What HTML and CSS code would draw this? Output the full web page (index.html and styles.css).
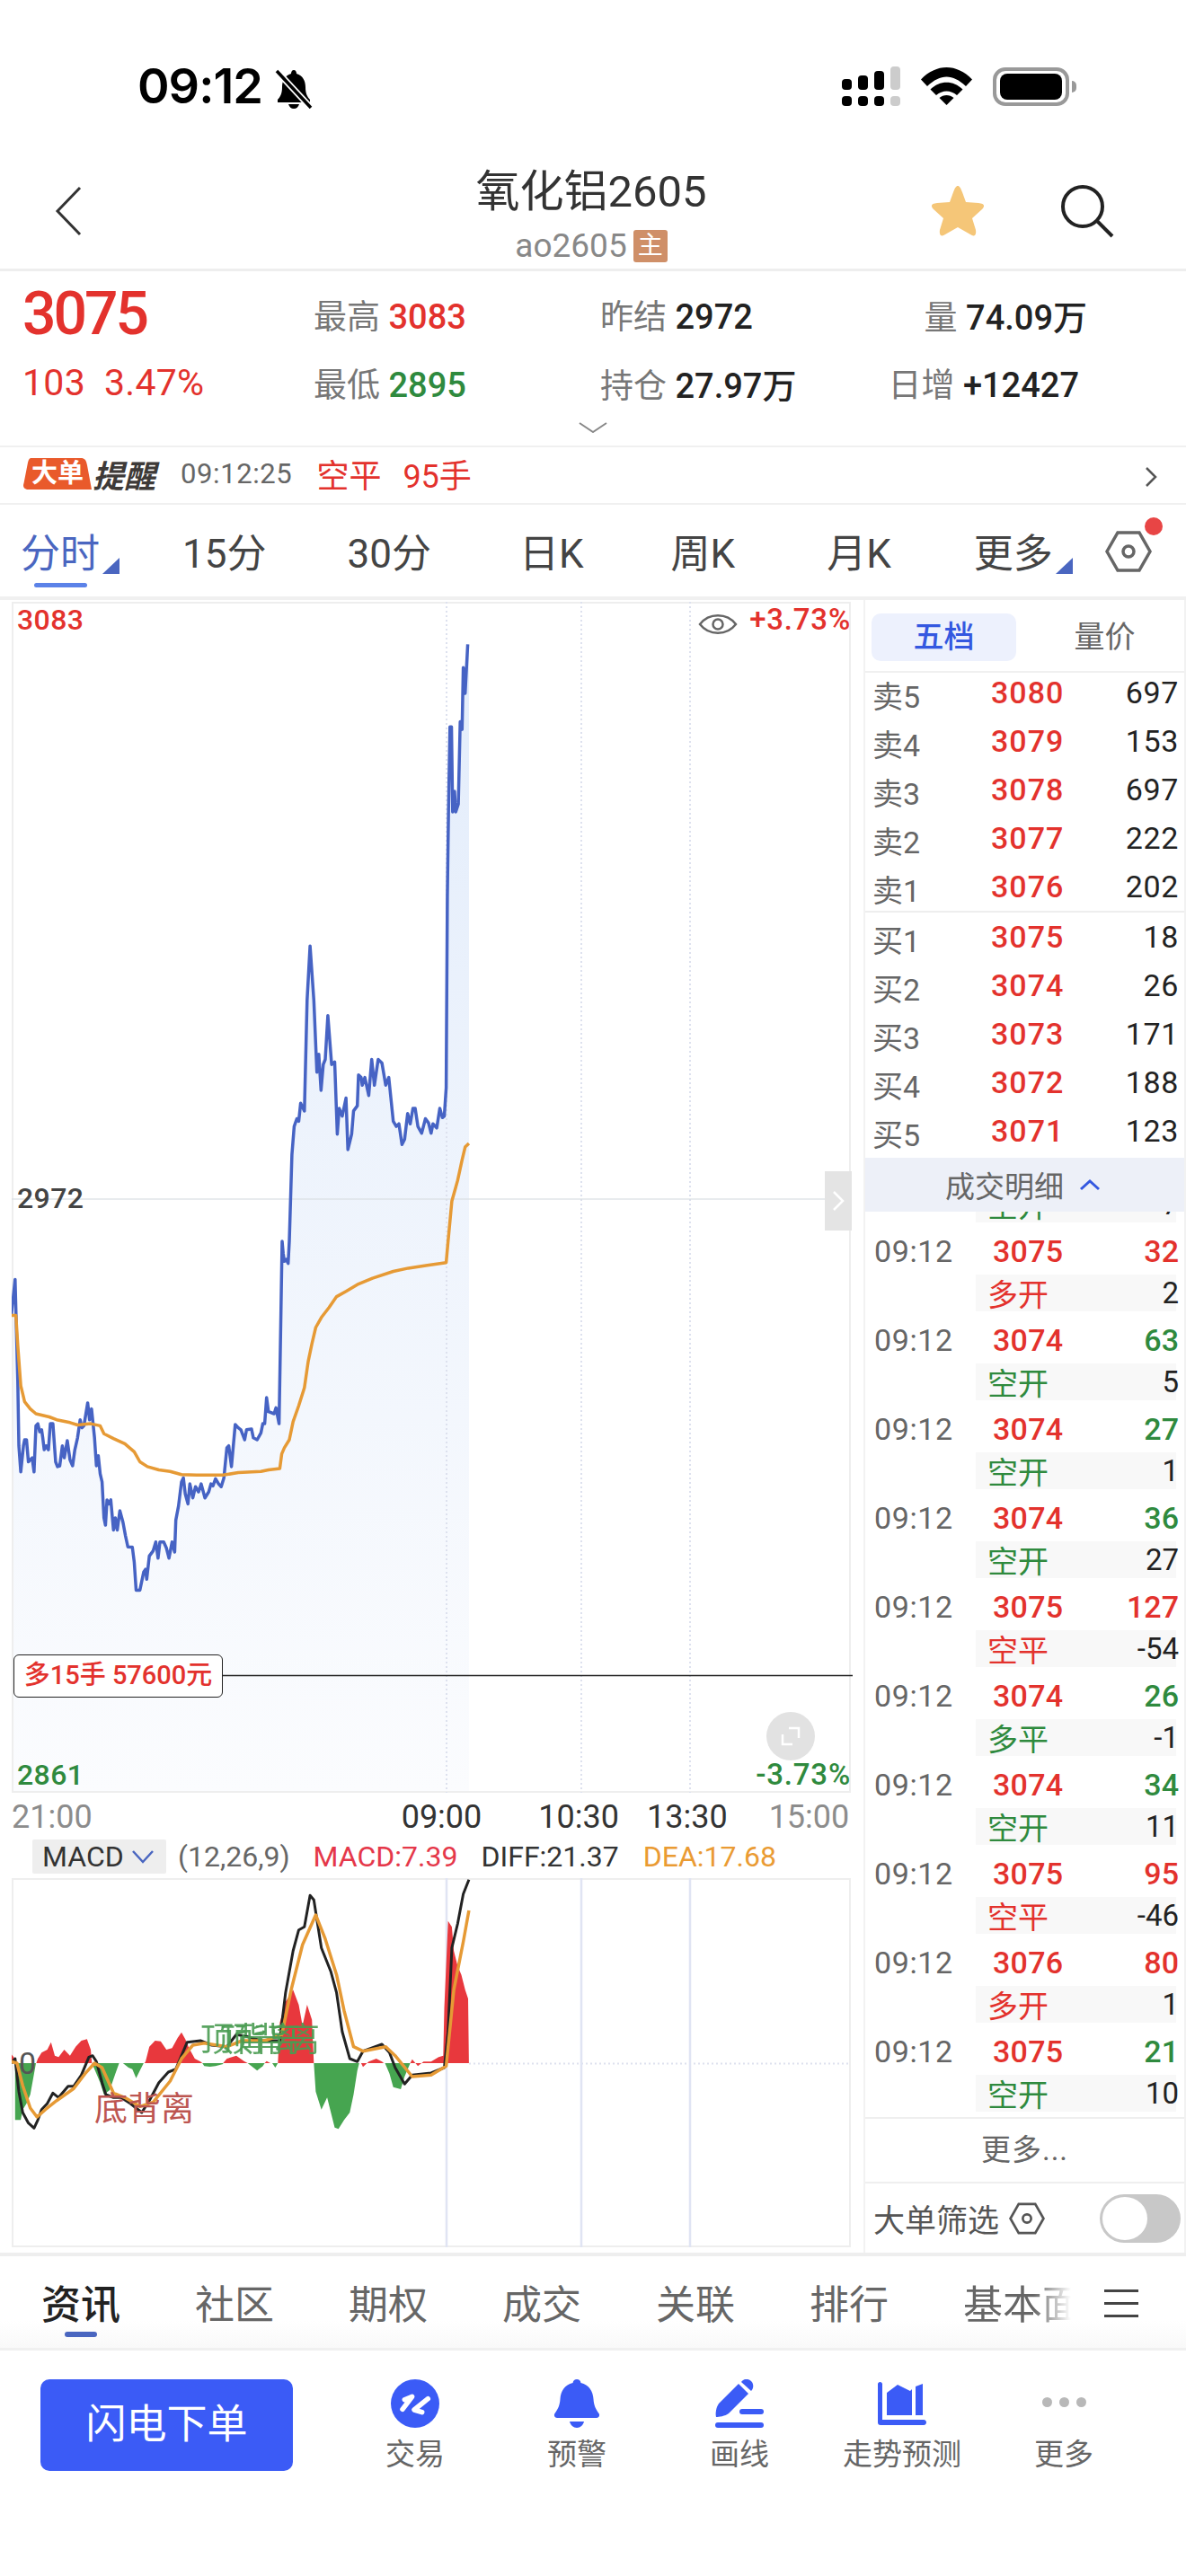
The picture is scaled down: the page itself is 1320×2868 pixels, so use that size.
FILE: index.html
```html
<!DOCTYPE html>
<html lang="zh">
<head>
  <meta charset="UTF-8">
  <title>氧化铝2605</title>
  <link rel="stylesheet" href="styles.css">
</head>
<body>
<div class="phone">

  <div class="status">
    <div class="status-left">
      <span class="clock">09:12</span>
      <svg class="mute" viewBox="0 0 44 44"><path d="M22 1c2 0 3 2 3 4 7 2 10 8 10 15 0 7 2 11 5 14v3H4v-3c3-3 5-7 5-14 0-7 3-13 10-15 0-2 1-4 3-4z" fill="#000"/><path d="M16 39h12c-1 3-3 5-6 5s-5-2-6-5z" fill="#000"/><path d="M3 2l38 41" stroke="#fff" stroke-width="7"/><path d="M3 2l38 41" stroke="#000" stroke-width="3.5"/></svg>
    </div>
    <div class="status-right">
      <svg class="signal" viewBox="0 0 65 44">
        <rect x="0" y="14" width="11" height="12" rx="4"/><rect x="18" y="10" width="11" height="16" rx="4"/><rect x="36" y="5" width="11" height="21" rx="4"/><rect x="54" y="0" width="11" height="26" rx="4" fill="#ccc"/>
        <rect x="0" y="33" width="11" height="11" rx="4"/><rect x="18" y="33" width="11" height="11" rx="4"/><rect x="36" y="33" width="11" height="11" rx="4"/><rect x="54" y="33" width="11" height="11" rx="4" fill="#ccc"/>
      </svg>
      <svg class="wifi" viewBox="0 0 57 42"><path d="M0 13.500C17-4.500 40-4.500 57 13.500L50 21C35 7 22 7 7 21z"/><path d="M10.500 24.500C21 14 36 14 46.500 24.500L40 31C33 25 24 25 17 31z"/><path d="M20.500 34C25 30 32 30 36.500 34L28.500 42z"/></svg>
      <div class="battery"><div class="battery-fill"></div></div>
      <div class="battery-cap"></div>
    </div>
  </div>

  <div class="nav">
    <svg class="nav-back" viewBox="0 0 30 56"><path d="M28 2L3 28l25 26" fill="none" stroke="#333" stroke-width="3"/></svg>
    <div class="nav-title">
      <div class="name">氧化铝2605</div>
      <div class="code">ao2605<span class="main-tag">主</span></div>
    </div>
    <svg class="nav-star" viewBox="0 0 62 60"><path d="M31 2c2 0 3 2 5 7l4 11 14 1c6 .5 8 3 4 7l-11 10 4 13c1 6-2 8-6 5l-14-8-14 8c-4 3-7 1-6-5l4-13L4 28c-4-4-2-6.500 4-7l14-1 4-11c2-5 3-7 5-7z" fill="#f5c678"/></svg>
    <svg class="nav-search" viewBox="0 0 60 60"><circle cx="25" cy="25" r="22" fill="none" stroke="#222" stroke-width="4"/><path d="M41 41l17 17" stroke="#222" stroke-width="4" fill="none"/></svg>
  </div>

  <div class="quote">
    <div class="quote-grid">
      <div class="last-price">3075</div>
      <div class="stat"><span>最高</span> <b class="red">3083</b></div>
      <div class="stat"><span>昨结</span> <b>2972</b></div>
      <div class="stat stat-end"><span>量</span> <b>74.09万</b></div>
      <div class="change red">103&nbsp;&nbsp;3.47%</div>
      <div class="stat"><span>最低</span> <b class="green">2895</b></div>
      <div class="stat"><span>持仓</span> <b>27.97万</b></div>
      <div class="stat stat-end stat-end-low"><span>日增</span> <b>+12427</b></div>
    </div>
    <svg class="quote-more" viewBox="0 0 32 12"><path d="M1 1l15 10L31 1" fill="none" stroke="#888" stroke-width="2"/></svg>
  </div>

  <div class="alert">
    <span class="alert-tag"><svg viewBox="0 0 76 35"><path d="M9 0H64C68 0 70 2 71 8L76 35H6C1 35-1 32 .5 28L5 5C6 1 7 0 9 0z" fill="#e95a2b"/></svg><b>大单</b></span>
    <span class="alert-word">提醒</span>
    <span class="alert-time">09:12:25</span>
    <span class="alert-kind">空平</span>
    <span class="alert-hands">95手</span>
    <svg class="alert-go" viewBox="0 0 14 24"><path d="M2 2l10 10L2 22" fill="none" stroke="#555" stroke-width="2.500"/></svg>
  </div>

  <div class="periods">
    <span class="period active">分时<i class="corner"></i><em class="period-line"></em></span>
    <span class="period p15">15分</span>
    <span class="period p30">30分</span>
    <span class="period pd">日K</span>
    <span class="period pw">周K</span>
    <span class="period pm">月K</span>
    <span class="period pmore">更多<i class="corner"></i></span>
    <span class="period-set">
      <svg viewBox="0 0 52 46"><path d="M14 2h24l12 21-12 21H14L2 23z" fill="none" stroke="#666" stroke-width="3.500"/><circle cx="26" cy="23" r="6" fill="none" stroke="#666" stroke-width="3.500"/></svg>
      <i class="red-dot"></i>
    </span>
  </div>

  <div class="main">
    <div class="charts">
      <div class="price-chart">
        <svg id="priceSvg" width="936" height="1326" viewBox="13 668 936 1326">
          <defs>
            <linearGradient id="areaFill" gradientUnits="userSpaceOnUse" x1="0" y1="668" x2="0" y2="1994">
              <stop offset="0" stop-color="#e2ecfb"/>
              <stop offset="1" stop-color="#fbfcfe"/>
            </linearGradient>
          </defs>
          <path id="priceArea" fill="url(#areaFill)"/>
          <rect x="14" y="669" width="932" height="1324" fill="none" stroke="#eee" stroke-width="2"/>
          <path class="grid-dots" d="M497 668V1994M647 668V1994M768 668V1994"/>
          <path d="M13 1333H946" stroke="#d9dde3" stroke-opacity=".6" stroke-width="2"/>
          <path d="M248 1863.500H949" stroke="#222" stroke-width="1.500"/>
          <path id="priceLine" class="line-blue"/>
          <path id="avgLine" class="line-orange"/>
        </svg>
        <span class="tag tag-high red">3083</span>
        <span class="tag tag-base">2972</span>
        <span class="tag tag-low green">2861</span>
        <span class="tag pct-high red">+3.73%</span>
        <span class="tag pct-low green">-3.73%</span>
        <svg class="eye" viewBox="0 0 44 30"><path d="M2 15C12 2 32 2 42 15 32 28 12 28 2 15z" fill="none" stroke="#666" stroke-width="2.500"/><circle cx="22" cy="15" r="5.500" fill="none" stroke="#666" stroke-width="2.500"/></svg>
        <div class="position red">多15手 57600元</div>
        <div class="side-handle"><svg viewBox="0 0 14 24"><path d="M2 2l10 10L2 22" fill="none" stroke="#fff" stroke-width="2.500"/></svg></div>
        <div class="expand"><svg viewBox="0 0 24 24"><path d="M10 3h11v11M14 21H3V10" fill="none" stroke="#fff" stroke-width="2.500"/></svg></div>
      </div>

      <div class="time-axis">
        <span class="t-open">21:00</span>
        <span class="t-dark t-nine">09:00</span>
        <span class="t-dark t-ten">10:30</span>
        <span class="t-dark t-one">13:30</span>
        <span class="t-close">15:00</span>
      </div>

      <div class="legend">
        <span class="legend-pick">MACD<svg viewBox="0 0 26 16"><path d="M2 2l11 12L24 2" fill="none" stroke="#4a66c0" stroke-width="2.500"/></svg></span>
        <span class="legend-args">(12,26,9)</span>
        <span class="legend-macd">MACD:7.39</span>
        <span class="legend-diff">DIFF:21.37</span>
        <span class="legend-dea">DEA:17.68</span>
      </div>

      <div class="macd-chart">
        <svg id="macdSvg" width="936" height="411" viewBox="13 2089 936 411">
          <rect x="14" y="2090" width="932" height="409" fill="none" stroke="#eee" stroke-width="2"/>
          <path d="M522 2295.500H946" class="grid-dots"/>
          <path d="M497 2089V2501M647 2089V2501M768 2089V2501" stroke="#e0e4f3" stroke-width="2.500" fill="none"/>
          <g id="macdBars"></g>
          <path id="diffLine" class="line-black"/>
          <path id="deaLine" class="line-orange"/>
        </svg>
        <span class="zero-mark">0</span>
        <span class="sign sign-top">顶背离</span>
        <span class="sign sign-top sign-top2">顶背离</span>
        <span class="sign sign-bottom">底背离</span>
      </div>
    </div>

    <div class="side">
      <div class="side-tabs">
        <span class="side-tab on">五档</span>
        <span class="side-tab">量价</span>
      </div>

      <div class="book book-sell">
        <div class="level"><span>卖5</span><b>3080</b><i>697</i></div>
        <div class="level"><span>卖4</span><b>3079</b><i>153</i></div>
        <div class="level"><span>卖3</span><b>3078</b><i>697</i></div>
        <div class="level"><span>卖2</span><b>3077</b><i>222</i></div>
        <div class="level"><span>卖1</span><b>3076</b><i>202</i></div>
      </div>
      <div class="book">
        <div class="level"><span>买1</span><b>3075</b><i>18</i></div>
        <div class="level"><span>买2</span><b>3074</b><i>26</i></div>
        <div class="level"><span>买3</span><b>3073</b><i>171</i></div>
        <div class="level"><span>买4</span><b>3072</b><i>188</i></div>
        <div class="level"><span>买5</span><b>3071</b><i>123</i></div>
      </div>

      <div class="deals-head">成交明细<svg viewBox="0 0 24 14"><path d="M2 12L12 3l10 9" fill="none" stroke="#3458e0" stroke-width="3"/></svg></div>

      <div class="deals">
        <div class="deal deal-cut">
          <div class="deal-top"></div>
          <div class="deal-sub"><span class="green">空开</span><i>7</i></div>
        </div>
        <div class="deal">
          <div class="deal-top"><span>09:12</span><b>3075</b><em class="red">32</em></div>
          <div class="deal-sub"><span class="red">多开</span><i>2</i></div>
        </div>
        <div class="deal">
          <div class="deal-top"><span>09:12</span><b>3074</b><em class="green">63</em></div>
          <div class="deal-sub"><span class="green">空开</span><i>5</i></div>
        </div>
        <div class="deal">
          <div class="deal-top"><span>09:12</span><b>3074</b><em class="green">27</em></div>
          <div class="deal-sub"><span class="green">空开</span><i>1</i></div>
        </div>
        <div class="deal">
          <div class="deal-top"><span>09:12</span><b>3074</b><em class="green">36</em></div>
          <div class="deal-sub"><span class="green">空开</span><i>27</i></div>
        </div>
        <div class="deal">
          <div class="deal-top"><span>09:12</span><b>3075</b><em class="red">127</em></div>
          <div class="deal-sub"><span class="red">空平</span><i>-54</i></div>
        </div>
        <div class="deal">
          <div class="deal-top"><span>09:12</span><b>3074</b><em class="green">26</em></div>
          <div class="deal-sub"><span class="green">多平</span><i>-1</i></div>
        </div>
        <div class="deal">
          <div class="deal-top"><span>09:12</span><b>3074</b><em class="green">34</em></div>
          <div class="deal-sub"><span class="green">空开</span><i>11</i></div>
        </div>
        <div class="deal">
          <div class="deal-top"><span>09:12</span><b>3075</b><em class="red">95</em></div>
          <div class="deal-sub"><span class="red">空平</span><i>-46</i></div>
        </div>
        <div class="deal">
          <div class="deal-top"><span>09:12</span><b>3076</b><em class="red">80</em></div>
          <div class="deal-sub"><span class="red">多开</span><i>1</i></div>
        </div>
        <div class="deal">
          <div class="deal-top"><span>09:12</span><b>3075</b><em class="green">21</em></div>
          <div class="deal-sub"><span class="green">空开</span><i>10</i></div>
        </div>
      </div>

      <div class="deals-more">更多...</div>

      <div class="filter">
        <span>大单筛选</span>
        <svg class="filter-set" viewBox="0 0 52 46"><path d="M14 2h24l12 21-12 21H14L2 23z" fill="none" stroke="#555" stroke-width="3.500"/><circle cx="26" cy="23" r="6" fill="none" stroke="#555" stroke-width="3.500"/></svg>
        <div class="toggle"><div class="knob"></div></div>
      </div>
    </div>
  </div>

  <div class="news-tabs">
    <span class="news-tab on">资讯<em></em></span>
    <span class="news-tab">社区</span>
    <span class="news-tab">期权</span>
    <span class="news-tab">成交</span>
    <span class="news-tab">关联</span>
    <span class="news-tab">排行</span>
    <span class="news-tab news-fade">基本面</span>
    <span class="news-menu"><i></i><i></i><i></i></span>
  </div>

  <div class="actions">
    <div class="flash-order">闪电下单</div>
    <div class="action a-trade">
      <svg viewBox="0 0 54 54"><circle cx="27" cy="27" r="27" fill="#3b5bf6"/><path d="M15.300 22.700L23.700 19.300 13 33.300M41.300 21.700L26 34 34.700 36.700" stroke="#fff" stroke-width="5.500" stroke-linecap="round" stroke-linejoin="round" fill="none"/></svg>
      <span>交易</span>
    </div>
    <div class="action a-alarm">
      <svg viewBox="-2 0 54 54"><path d="M25 0c2.500 0 4 1.500 4.500 4 9 2 13.500 9 14 18 .5 7 2 10 6 16 1.500 2 0 5-2.500 5H3C.5 43-1 40 .5 38c4-6 5.500-9 6-16 .5-9 5-16 14-18C21 1.500 22.500 0 25 0z" fill="#3b5bf6"/><path d="M17 47h16c-1 4-4 7-8 7s-7-3-8-7z" fill="#3b5bf6"/></svg>
      <span>预警</span>
    </div>
    <div class="action a-draw">
      <svg viewBox="0 0 54 54"><path d="M26 5L37 16 15 38C11 41 4 42 1 42 0 38 1 31 4 27z" fill="#3b5bf6"/><path d="M29 3C32-1 37-1 40 2 43 5 43 10 40 13z" fill="#3b5bf6"/><rect x="27" y="33" width="27" height="6" rx="3" fill="#3b5bf6"/><rect y="48" width="54" height="6" rx="3" fill="#3b5bf6"/></svg>
      <span>画线</span>
    </div>
    <div class="action a-trend">
      <svg viewBox="0 -3 54 54"><path d="M2.500 0C4 0 5 1 5 2.500V42H51C53 42 54 43.500 54 45S53 48 51 48H3C1 48 0 47 0 45V2.500C0 1 1 0 2.500 0z" fill="#3b5bf6"/><path d="M10 12L22 3 36 10 38 8V37H10z" fill="#3b5bf6"/><path d="M42 5L50 2V37H42z" fill="#3b5bf6"/></svg>
      <span>走势预测</span>
    </div>
    <div class="action a-more">
      <div class="dots"><i></i><i></i><i></i></div>
      <span>更多</span>
    </div>
  </div>
</div>
<script src="chart.js"></script>
</body>
</html>
```

FILE: styles.css
```css
* { box-sizing: border-box; }
body {
  margin: 0;
  background: #fff;
  font-family: Roboto, "Noto Sans CJK SC", sans-serif;
  color: #222;
}
.phone {
  width: 1320px;
  height: 2868px;
  overflow: hidden;
}
.red { color: #e3322d; }
.green { color: #2f8a3e; }
b, i, em { font-style: normal; }

/* status bar */
.status {
  height: 180px;
  display: flex;
  justify-content: space-between;
  padding: 72px 122px 0 153px;
}
.status-left { display: flex; align-items: flex-start; }
.clock {
  font-family: Inter, sans-serif;
  font-weight: 600;
  font-size: 54px;
  line-height: 48px;
  color: #000;
  letter-spacing: -1px;
}
.mute { width: 44px; height: 44px; margin: 5px 0 0 13px; }
.status-right { display: flex; align-items: flex-start; }
.signal { width: 65px; height: 44px; margin-top: 2px; }
.wifi { width: 57px; height: 42px; margin: 3px 0 0 23px; }
.battery {
  width: 85px;
  height: 43px;
  margin: 3px 0 0 23px;
  border: 4px solid #999;
  border-radius: 14px;
  padding: 3px 4px;
}
.battery-fill { height: 100%; background: #000; border-radius: 8px; }
.battery-cap {
  width: 5px;
  height: 13px;
  margin: 18px 0 0 3px;
  background: #999;
  border-radius: 0 6px 6px 0;
}

/* nav */
.nav {
  height: 122px;
  position: relative;
  border-bottom: 3px solid #eeeeee;
}
.nav-title { text-align: center; padding: 7px 4px 0 0; }
.name { font-size: 49px; line-height: 54px; color: #333; }
.code {
  font-size: 37px;
  line-height: 40px;
  color: #888;
  margin-top: 13px;
  display: flex;
  justify-content: center;
  align-items: center;
  gap: 7px;
}
.main-tag {
  width: 38px;
  height: 36px;
  background: #cf8f68;
  color: #fff;
  font-size: 28px;
  line-height: 36px;
  border-radius: 3px;
}
.nav-back { position: absolute; left: 61px; top: 27px; width: 30px; height: 56px; }
.nav-star { position: absolute; left: 1035px; top: 25px; width: 62px; height: 60px; }
.nav-search { position: absolute; left: 1180px; top: 25px; width: 60px; height: 60px; }

/* quote */
.quote {
  height: 196px;
  position: relative;
  border-bottom: 2px solid #f0f0f0;
  padding: 10px 0 0 25px;
}
.quote-grid {
  display: grid;
  grid-template-columns: 324px 319px 1fr 320px;
  grid-template-rows: 76px 76px;
  align-items: center;
}
.last-price { font-size: 66px; font-weight: 500; color: #e3322d; line-height: 64px; letter-spacing: -3px; }
.change { font-size: 41px; letter-spacing: .3px; }
.stat { font-size: 38px; white-space: nowrap; }
.stat span { color: #777; font-size: 37px; }
.stat b { font-weight: 500; }
.stat-end { justify-self: end; margin-right: 110px; }
.stat-end-low { margin-right: 119px; }
.quote-more { position: absolute; left: 644px; top: 168px; width: 32px; height: 12px; }

/* big order alert */
.alert {
  height: 64px;
  display: flex;
  align-items: center;
  padding: 0 0 4px 26px;
  position: relative;
  border-bottom: 2px solid #f0f0f0;
}
.alert-tag {
  position: relative;
  width: 76px;
  height: 35px;
  color: #fff;
  text-align: center;
  flex: none;
  display: flex;
  align-items: center;
  justify-content: center;
}
.alert-tag svg { position: absolute; left: 0; top: 0; width: 76px; height: 35px; }
.alert-tag b { position: relative; font-size: 29px; font-weight: 700; line-height: 35px; }
.alert-word { font-size: 35px; font-weight: 700; font-style: italic; color: #3e3a38; margin-left: 1px; }
.alert-time { font-size: 31px; color: #666; margin-left: 28px; letter-spacing: .6px; }
.alert-kind { font-size: 36px; color: #e3322d; margin-left: 27px; }
.alert-hands { font-size: 36px; color: #e3322d; margin-left: 24px; }
.alert-go { position: absolute; left: 1274px; top: 21px; width: 14px; height: 24px; }

/* period tabs */
.periods {
  height: 106px;
  display: flex;
  align-items: center;
  padding-left: 23px;
  position: relative;
  border-bottom: 4px solid #f0f0f0;
  font-size: 44px;
  color: #444;
}
.period { position: relative; white-space: nowrap; }
.period.active { color: #4a66c0; }
.p15 { margin-left: 92px; }
.p30 { margin-left: 90px; }
.pd { margin-left: 98px; }
.pw { margin-left: 97px; }
.pm { margin-left: 102px; }
.pmore { margin-left: 92px; }
.corner {
  position: absolute;
  right: -22px;
  bottom: 6px;
  width: 0;
  height: 0;
  border-left: 19px solid transparent;
  border-bottom: 18px solid #4a66c0;
}
.period-line {
  position: absolute;
  left: 15px;
  bottom: -9px;
  width: 59px;
  height: 5px;
  border-radius: 3px;
  background: #5b82e8;
}
.period-set { position: absolute; left: 1230px; top: 29px; width: 52px; height: 46px; }
.period-set svg { width: 52px; height: 46px; display: block; }
.red-dot {
  position: absolute;
  left: 44px;
  top: -15px;
  width: 20px;
  height: 20px;
  border-radius: 50%;
  background: #e84545;
}

/* main area */
.main {
  height: 1844px;
  display: flex;
  border-bottom: 4px solid #eeeeee;
}
.charts { width: 961px; padding: 2px 0 0 13px; flex: none; }
.price-chart { position: relative; height: 1326px; width: 936px; }
.price-chart svg, .macd-chart svg { display: block; }
.grid-dots { stroke: #dde1ee; stroke-width: 2; stroke-dasharray: 2 3; fill: none; }
.line-blue { fill: none; stroke: #4663c4; stroke-width: 3.500; stroke-linejoin: round; }
.line-orange { fill: none; stroke: #e69a35; stroke-width: 3.500; stroke-linejoin: round; }
.line-black { fill: none; stroke: #222; stroke-width: 3; stroke-linejoin: round; }

.tag { position: absolute; font-size: 32px; font-weight: 500; line-height: 36px; letter-spacing: .4px; }
.tag-high { left: 6px; top: 2px; }
.tag-base { left: 6px; top: 646px; color: #444; }
.tag-low { left: 6px; top: 1288px; }
.pct-high, .pct-low { font-size: 33px; letter-spacing: .8px; }
.pct-high { right: 2px; top: 2px; }
.pct-low { right: 2px; top: 1288px; }
.eye { position: absolute; left: 764px; top: 10px; width: 44px; height: 30px; }
.position {
  position: absolute;
  left: 2px;
  top: 1172px;
  width: 233px;
  height: 48px;
  border: 1.500px solid #222;
  border-radius: 6px;
  background: #fff;
  font-size: 29px;
  font-weight: 500;
  line-height: 45px;
  text-align: center;
  white-space: nowrap;
}
.side-handle {
  position: absolute;
  left: 905px;
  top: 634px;
  width: 30px;
  height: 66px;
  background: #e4e4e4;
  display: flex;
  align-items: center;
  justify-content: center;
}
.side-handle svg { width: 14px; height: 24px; }
.expand {
  position: absolute;
  left: 840px;
  top: 1236px;
  width: 54px;
  height: 54px;
  border-radius: 50%;
  background: #e2e2e2;
  display: flex;
  align-items: center;
  justify-content: center;
}
.expand svg { width: 24px; height: 24px; }

.time-axis {
  height: 53px;
  display: flex;
  align-items: center;
  font-size: 36px;
}
.t-open, .t-close { color: #8c8c8c; }
.t-dark { color: #333; }
.t-nine { margin-left: 344px; }
.t-ten { margin-left: 63px; }
.t-one { margin-left: 31px; }
.t-close { margin-left: 46px; }

.legend {
  height: 38px;
  margin-bottom: 4px;
  display: flex;
  align-items: center;
  font-size: 32px;
  white-space: nowrap;
  position: relative;
  top: -1px;
}
.legend-pick {
  margin-left: 23px;
  width: 149px;
  height: 38px;
  background: #eeeeee;
  border-radius: 2px;
  padding-left: 11px;
  display: flex;
  align-items: center;
  color: #333;
}
.legend-pick svg { width: 26px; height: 16px; margin-left: 8px; }
.legend-args { margin-left: 13px; color: #666; }
.legend-macd { margin-left: 26px; color: #e5384a; }
.legend-diff { margin-left: 26px; color: #333; }
.legend-dea { margin-left: 27px; color: #ea9b33; }

.macd-chart { position: relative; height: 411px; width: 936px; }
.zero-mark { position: absolute; left: 8px; top: 186px; font-size: 34px; line-height: 40px; color: #555; }
.sign { position: absolute; font-size: 37px; line-height: 44px; white-space: nowrap; }
.sign-top { left: 210px; top: 159px; color: #4a9c52; opacity: .9; }
.sign-top2 { left: 232px; }
.sign-bottom { left: 92px; top: 236px; color: #bd5651; }

/* right panel */
.side {
  flex: none;
  width: 359px;
  border-left: 2px solid #f2f2f2;
  border-right: 2px solid #f2f2f2;
  display: flex;
  flex-direction: column;
}
.side-tabs {
  height: 81px;
  flex: none;
  padding: 15px 0 0 7px;
  display: flex;
  border-bottom: 2px solid #f0f0f0;
}
.side-tab {
  width: 161px;
  height: 53px;
  text-align: center;
  font-size: 34px;
  line-height: 53px;
  color: #666;
  border-radius: 10px;
}
.side-tab + .side-tab { margin-left: 18px; }
.side-tab.on { background: #edf1fd; color: #3458e0; font-weight: 500; }
.book-sell { border-bottom: 2px solid #eeeeee; margin-top: -5px; }
.level {
  height: 54px;
  display: flex;
  align-items: center;
  padding: 0 6px 0 8px;
}
.level span { width: 132px; font-size: 34px; color: #666; padding-top: 5px; }
.level b { font-size: 34px; font-weight: 500; color: #e3322d; letter-spacing: 1px; }
.level i { margin-left: auto; font-size: 34px; color: #222; letter-spacing: .6px; }
.book + .book { margin-bottom: 3px; }

.deals-head {
  height: 60px;
  flex: none;
  background: #edf0f8;
  display: flex;
  align-items: center;
  justify-content: center;
  font-size: 33px;
  color: #666;
  padding-right: 4px;
}
.deals-head svg { width: 24px; height: 14px; margin-left: 17px; }
.deals { height: 1008px; flex: none; overflow: hidden; }
.deal { height: 99px; padding: 0 6px 0 10px; }
.deal-cut { margin-top: -80px; }
.deal-top { height: 50px; display: flex; align-items: center; font-size: 34px; }
.deal-top span { width: 132px; color: #666; letter-spacing: .6px; }
.deal-top b { font-weight: 500; color: #e3322d; letter-spacing: .3px; }
.deal-top em { margin-left: auto; font-weight: 500; }
.deal-sub {
  height: 41px;
  margin: 1px 3px 0 113px;
  background: #f8f8f8;
  display: flex;
  align-items: center;
  padding-left: 13px;
  font-size: 34px;
}
.deal-sub i { margin-left: auto; font-size: 33px; color: #222; margin-right: -3px; }

.deals-more {
  height: 74px;
  flex: none;
  border-top: 2px solid #efefef;
  border-bottom: 2px solid #efefef;
  text-align: center;
  font-size: 33px;
  line-height: 70px;
  color: #666;
  letter-spacing: 1px;
}
.filter {
  flex: 1;
  display: flex;
  align-items: center;
  padding-left: 9px;
  font-size: 35px;
  color: #555;
}
.filter-set { width: 40px; height: 36px; margin-left: 11px; }
.toggle {
  width: 90px;
  height: 54px;
  margin-left: auto;
  margin-right: 4px;
  border-radius: 27px;
  background: #c8c8c8;
  padding: 3px;
}
.knob { width: 50px; height: 48px; border-radius: 50%; background: #fff; }

/* bottom tabs */
.news-tabs {
  height: 105px;
  display: flex;
  align-items: center;
  gap: 83px;
  padding: 0 0 0 46px;
  position: relative;
  font-size: 44px;
  color: #666;
  border-bottom: 3px solid #f0f0f0;
  background: linear-gradient(#fff 70%, #f9f9f9);
}
.news-tab { position: relative; white-space: nowrap; flex: none; }
.news-tab.on { color: #222; font-weight: 500; }
.news-tab em {
  position: absolute;
  left: 26px;
  bottom: -7px;
  width: 36px;
  height: 6px;
  border-radius: 3px;
  background: #4a66c0;
}
.news-fade {
  width: 120px;
  overflow: hidden;
  -webkit-mask-image: linear-gradient(90deg, #000 65%, transparent);
  mask-image: linear-gradient(90deg, #000 65%, transparent);
}
.news-menu {
  position: absolute;
  left: 1229px;
  top: 37px;
  width: 38px;
  height: 31px;
  display: flex;
  flex-direction: column;
  justify-content: space-between;
}
.news-menu i { height: 3px; background: #444; display: block; }

/* bottom actions */
.actions {
  height: 253px;
  position: relative;
  padding: 32px 0 0 45px;
  display: flex;
}
.flash-order {
  width: 281px;
  height: 102px;
  border-radius: 10px;
  background: #3b5bf6;
  color: #fff;
  font-size: 45px;
  line-height: 102px;
  text-align: center;
  flex: none;
}
.action {
  width: 170px;
  flex: none;
  display: flex;
  flex-direction: column;
  align-items: center;
  font-size: 33px;
  line-height: 40px;
  color: #666;
}
.action svg, .dots { width: 54px; height: 54px; margin-bottom: 10px; flex: none; }
.a-trade { margin-left: 51px; }
.a-alarm { margin-left: 10px; }
.a-draw { margin-left: 11px; }
.a-trend { margin-left: 11px; }
.a-more { margin-left: 10px; }
.dots { display: flex; align-items: center; justify-content: center; gap: 8px; padding-bottom: 4px; }
.dots i { width: 11px; height: 11px; border-radius: 50%; background: #b8b8b8; }
```

FILE: chart.js
```js
// series were read off the picture at 2.376x horizontally, each with its own vertical scale
const SX = 1 / 2.376;

function toPage(points, top, scaleY) {
  return points.map(([x, y]) => [x * SX, top + y * scaleY]);
}

function pathOf(points) {
  return 'M' + points.map(p => p[0].toFixed(1) + ' ' + p[1].toFixed(1)).join('L');
}

const lowerPart = t => toPage(t, 1380, 1 / 2.24);
const upperPart = t => toPage(t, 480, 1 / 1.742);
const macdPart = t => toPage(t, 2000, 1 / 3);

const price = lowerPart([
  [30,185],[40,95],[47,350],[50,510],[55,575],[62,510],[65,495],[70,495],[75,550],[80,545],[85,540],[90,575],
  [95,460],[100,455],[105,475],[110,470],[113,490],[117,520],[122,510],[128,520],[133,455],[140,455],[147,550],
  [152,562],[158,560],[165,510],[170,540],[178,497],[185,545],[192,560],[198,520],[205,490],[212,445],[217,465],
  [222,460],[232,403],[237,445],[242,418],[250,490],[255,560],[260,535],[265,580],[270,600],[275,690],[279,708],
  [283,645],[288,655],[293,645],[300,720],[305,690],[310,720],[317,672],[325,700],[332,735],[338,762],[350,763],
  [355,800],[360,870],[370,870],[380,825],[385,818],[388,843],[395,785],[405,772],[412,750],[418,790],[423,750],
  [433,750],[440,765],[447,790],[455,750],[462,775],[465,695],[472,660],[480,600],[485,590],[490,630],[497,655],
  [502,605],[510,640],[517,612],[525,625],[532,605],[542,640],[552,625],[558,605],[563,610],[570,592],[578,605],
  [585,612],[592,590],[600,515],[605,510],[612,562],[622,457],[630,465],[637,470],[647,495],[652,470],[665,468],
  [670,490],[680,495],[690,478],[695,455],[700,455],[705,390],[710,425],[725,430],[730,415],[738,455],[742,230],
  [746,0],[749,30],[752,50],[757,45],[762,55],[765,0]
]).concat(upperPart([
  [772,1400],[778,1345],[785,1330],[790,1335],[795,1300],[805,1315],[812,1100],[820,995],[830,1100],[838,1240],
  [843,1205],[849,1275],[855,1225],[860,1215],[867,1130],[877,1225],[885,1220],[892,1360],[897,1310],[905,1325],
  [915,1290],[920,1390],[930,1360],[935,1315],[945,1305],[948,1245],[955,1250],[958,1265],[965,1250],[975,1285],
  [983,1215],[990,1265],[1000,1215],[1010,1222],[1020,1265],[1028,1250],[1040,1335],[1048,1345],[1055,1340],
  [1063,1380],[1070,1370],[1078,1320],[1085,1340],[1092,1310],[1098,1310],[1105,1345],[1115,1358],[1125,1330],
  [1133,1338],[1140,1358],[1145,1340],[1155,1348],[1163,1310],[1170,1328],[1175,1325],[1180,1270],[1183,900],
  [1186,730],[1190,570],[1194,570],[1197,735],[1202,695],[1205,735],[1212,720],[1217,560],[1222,575],[1225,455],
  [1230,505],[1237,410]
]));

const average = lowerPart([
  [30,185],[42,185],[47,260],[55,360],[65,400],[80,418],[95,430],[130,438],[150,445],[185,452],[205,458],[240,455],
  [265,460],[275,480],[300,492],[330,505],[355,525],[370,550],[390,562],[420,570],[450,574],[480,582],[520,583],
  [590,583],[630,577],[690,574],[710,570],[740,567],[745,530],[752,515],[765,495],[775,450],[790,410],[805,365],
  [815,300],[825,255],[835,215],[850,190],[870,165],[890,138],[915,125],[945,108],[985,92],[1040,75],[1080,67],
  [1130,60],[1180,53],[1185,0]
]).concat(upperPart([[1195,1490],[1210,1450],[1222,1410],[1230,1385],[1240,1378]]));

const diff = macdPart([
  [30,885],[40,870],[50,980],[60,1050],[75,1085],[90,1102],[100,1075],[110,1040],[125,1020],[140,985],[155,1000],
  [180,962],[195,962],[215,925],[235,865],[245,860],[255,880],[270,950],[280,990],[300,1000],[320,1000],[345,1020],
  [375,1050],[395,1010],[420,950],[445,915],[465,905],[480,860],[495,815],[530,810],[560,825],[600,830],[625,790],
  [650,795],[690,810],[740,810],[755,650],[775,510],[790,440],[805,430],[820,325],[830,340],[850,500],[875,580],
  [890,650],[905,780],[925,870],[945,880],[960,845],[1010,822],[1030,850],[1045,900],[1070,955],[1090,925],
  [1140,918],[1175,900],[1185,780],[1195,500],[1210,420],[1225,320],[1240,272]
]);

const dea = macdPart([
  [30,880],[45,885],[60,960],[80,1035],[98,1065],[120,1040],[150,1010],[195,970],[225,920],[250,885],[270,900],
  [300,985],[330,1000],[370,1030],[405,1015],[450,945],[480,870],[510,825],[540,818],[600,830],[640,810],[700,810],
  [745,790],[770,640],[800,490],[835,390],[860,470],[890,590],[910,710],[935,830],[960,845],[1020,830],[1045,860],
  [1090,930],[1140,925],[1180,895],[1200,640],[1225,480],[1240,375]
]);

const RED = '#e8383d';
const GREEN = '#46a550';
const bars = [
  [RED, [[30,855],[36,865],[40,885]]],
  [GREEN, [[40,1075],[55,1075],[60,1040],[70,1020],[80,990],[90,920],[95,885]]],
  [RED, [[96,885],[100,870],[110,850],[125,840],[135,815],[145,860],[155,865],[170,840],[185,860],[200,830],[215,810],[230,805],[240,840],[243,885]]],
  [GREEN, [[243,885],[255,920],[265,950],[275,990],[290,975],[305,920],[315,885],[325,885],[340,900],[350,905],[360,935],[370,910],[380,885]]],
  [RED, [[382,885],[385,880],[395,830],[410,810],[425,812],[440,840],[455,835],[470,800],[480,782],[490,805],[500,835],[515,870],[530,880],[535,885]]],
  [GREEN, [[535,885],[540,895],[555,897],[570,895],[590,888]]],
  [RED, [[590,885],[600,870],[625,860],[645,878],[655,885]]],
  [GREEN, [[655,885],[670,900],[680,910],[695,895],[700,885]]],
  [RED, [[700,885],[705,878],[715,885]]],
  [GREEN, [[720,885],[728,900],[735,885]]],
  [RED, [[735,885],[740,750],[755,680],[775,640],[790,690],[800,760],[812,690],[825,740],[830,885]]],
  [GREEN, [[830,885],[835,980],[850,1040],[865,1000],[885,1100],[895,1105],[910,1075],[925,1050],[935,990],[945,910],[950,885]]],
  [RED, [[955,885],[960,898],[975,880],[995,870],[1010,880],[1015,885]]],
  [GREEN, [[1018,885],[1030,920],[1040,965],[1060,972],[1070,930],[1085,885]]],
  [RED, [[1085,885],[1090,872],[1105,895],[1120,880],[1140,880],[1160,865],[1172,860],[1175,700],[1185,410],[1195,430],[1200,510],[1210,560],[1220,590],[1230,640],[1238,670],[1240,885]]]
];

document.getElementById('priceLine').setAttribute('d', pathOf(price));
document.getElementById('avgLine').setAttribute('d', pathOf(average));
document.getElementById('priceArea').setAttribute('d', pathOf(price) + 'L522 ' + price[price.length - 1][1].toFixed(1) + 'L522 1994L13 1994Z');
document.getElementById('diffLine').setAttribute('d', pathOf(diff));
document.getElementById('deaLine').setAttribute('d', pathOf(dea));

const barGroup = document.getElementById('macdBars');
bars.forEach(([color, tops]) => {
  const first = tops[0][0];
  const last = tops[tops.length - 1][0];
  const outline = macdPart([[first, 885]].concat(tops, [[last, 885]]));
  const shape = document.createElementNS('http://www.w3.org/2000/svg', 'path');
  shape.setAttribute('d', pathOf(outline) + 'Z');
  shape.setAttribute('fill', color);
  barGroup.appendChild(shape);
});
```
